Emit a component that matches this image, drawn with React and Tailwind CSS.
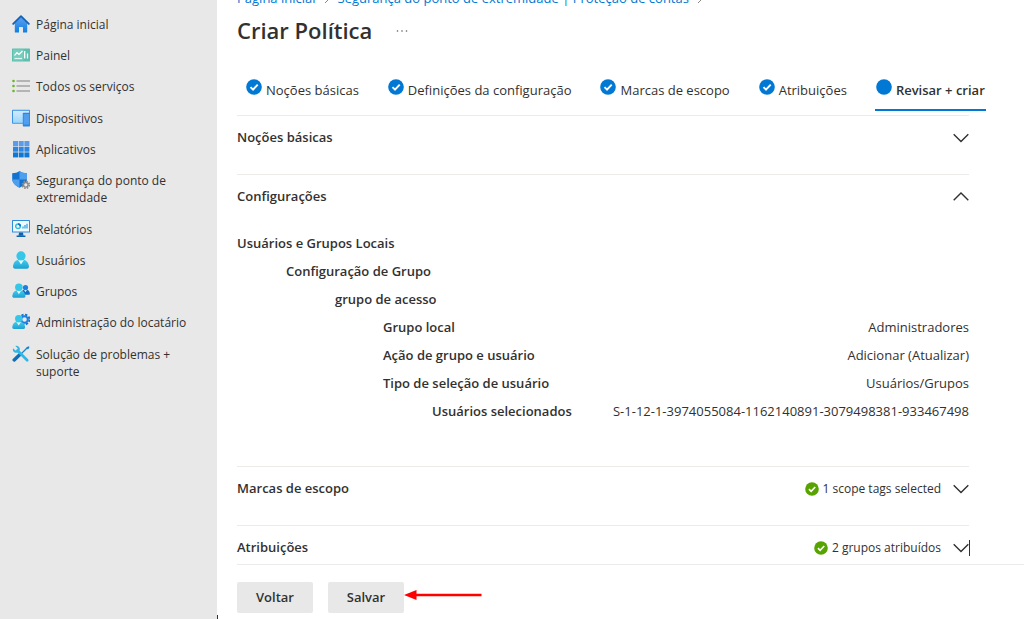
import React, { useState } from 'react';

const HomeIcon = () => (
  <svg width="18" height="18" viewBox="0 0 18 18" className="-mt-px shrink-0" aria-hidden="true">
    <defs>
      <linearGradient id="home-a" x1="0" y1="0" x2="0" y2="1">
        <stop offset="0" stopColor="#5ea0ef" />
        <stop offset="1" stopColor="#0f7fe3" />
      </linearGradient>
    </defs>
    <path d="M9 2.2 2.8 8.3v8.6c0 .3.2.6.6.6H7v-4.9c0-.4.2-.6.6-.6h2.8c.4 0 .6.2.6.6v4.9h3.6c.4 0 .6-.3.6-.6V8.3z" fill="url(#home-a)" />
    <path d="M9.6.6a.9.9 0 0 0-1.2 0L.3 8.5c-.2.2-.2.5 0 .7l.6.6c.2.2.5.2.7 0L9 2.6l7.4 7.2c.2.2.5.2.7 0l.6-.6c.2-.2.2-.5 0-.7z" fill="#0f62b8" />
  </svg>
);

const DashboardIcon = () => (
  <svg width="18" height="18" viewBox="0 0 18 18" className="-mt-px shrink-0" aria-hidden="true">
    <rect x="0" y="2.5" width="18" height="13" rx=".6" fill="#5fbfae" />
    <rect x="1" y="3.5" width="10.5" height="11" fill="#77cdbd" />
    <path d="M2.500 9.5 5 6.7l2 1.8L10.500 5" fill="none" stroke="#fff" strokeWidth="1.2" />
    <path d="M2.500 12.500H10" stroke="#e2f5f1" strokeWidth="1.2" />
    <path d="M12.700 5v7.500M15.500 7.500v5" stroke="#fff" strokeWidth="1.3" />
  </svg>
);

const ServicesIcon = () => (
  <svg width="18" height="18" viewBox="0 0 18 18" className="-mt-px shrink-0" aria-hidden="true">
    <path d="M4.500 4H18M4.500 9H18M4.500 14H18" stroke="#a3a3a3" strokeWidth="1.3" />
    <g fill="#6bb52c">
      <circle cx="1.5" cy="4" r="1.3" />
      <circle cx="1.5" cy="9" r="1.3" />
      <circle cx="1.5" cy="14" r="1.3" />
    </g>
  </svg>
);

const DevicesIcon = () => (
  <svg width="18" height="18" viewBox="0 0 18 18" className="-mt-px shrink-0" aria-hidden="true">
    <defs>
      <linearGradient id="dev-a" x1="0" y1="0" x2="0" y2="1">
        <stop offset="0" stopColor="#d2ebff" />
        <stop offset="1" stopColor="#9bd6fa" />
      </linearGradient>
    </defs>
    <rect x="0" y=".8" width="18" height="14" rx=".7" fill="#3b92e6" />
    <rect x="1" y="1.8" width="16" height="12" fill="url(#dev-a)" />
    <rect x="10.8" y="3.8" width="7.2" height="13.700" rx=".7" fill="#2e84e0" />
    <rect x="11.600" y="5" width="5.600" height="10.500" fill="#4f9fee" />
  </svg>
);

const AppsIcon = () => (
  <svg width="18" height="18" viewBox="0 0 18 18" className="-mt-px shrink-0" aria-hidden="true">
    <g fill="#5b9bea">
      <rect x="1" y="1" width="5" height="5" />
      <rect x="6.7" y="1" width="5" height="5" />
      <rect x="12.4" y="1" width="5" height="5" />
    </g>
    <g fill="#2e86e0">
      <rect x="1" y="6.7" width="5" height="5" />
      <rect x="6.7" y="6.7" width="5" height="5" />
      <rect x="12.4" y="6.7" width="5" height="5" />
    </g>
    <g fill="#0e78d4">
      <rect x="1" y="12.4" width="5" height="5" />
      <rect x="6.7" y="12.4" width="5" height="5" />
      <rect x="12.4" y="12.4" width="5" height="5" />
    </g>
  </svg>
);

const SecurityIcon = () => (
  <svg width="18" height="18" viewBox="0 0 18 18" className="-mt-px shrink-0" aria-hidden="true">
    <path d="M7.500 0C9.500 1.600 12 2.200 15 2.200V8c0 4-4 7.200-7.500 8.700C4 15.200.2 12 .2 8V2.200C3 2.200 5.500 1.600 7.500 0z" fill="#1173cf" />
    <path d="M7.500 0C9.500 1.600 12 2.200 15 2.200V8.500H7.500z" fill="#4f9ff0" />
    <path d="M7.500 8.500H.2c.3 3.700 4 6.800 7.300 8.200z" fill="#4f9ff0" />
    <circle cx="13.8" cy="13.8" r="3.5" fill="none" stroke="#8a8a8a" strokeWidth="1.6" strokeDasharray="1.55 1.2" />
    <circle cx="13.8" cy="13.8" r="2.3" fill="#e8e8e8" stroke="#8a8a8a" strokeWidth="1.4" />
  </svg>
);

const ReportsIcon = () => (
  <svg width="18" height="18" viewBox="0 0 18 18" className="-mt-px shrink-0" aria-hidden="true">
    <rect x="0" y="0" width="18" height="12.500" rx=".6" fill="#2d8ddb" />
    <rect x="1" y="1" width="16" height="10.500" fill="#f0f9ff" />
    <circle cx="6" cy="6.200" r="2.300" fill="none" stroke="#32bedd" strokeWidth="1.5" />
    <path d="M6 3.900A2.300 2.300 0 0 1 8.300 6.200" fill="none" stroke="#0f6fc5" strokeWidth="1.5" />
    <path d="M11 8.400V6.500M13 8.400V5M15 8.400V3.800" stroke="#32a5dd" strokeWidth="1.3" />
    <path d="M7 12.500h4l.5 3.200H6.500z" fill="#0f62b0" />
    <rect x="4.5" y="15.400" width="9" height="1.600" rx=".4" fill="#0f62b0" />
  </svg>
);

const UserShape = ({ id }) => (
  <>
    <defs>
      <linearGradient id={id} x1="0" y1="0" x2="0" y2="1">
        <stop offset="0" stopColor="#3fd0ee" />
        <stop offset="1" stopColor="#1f9fd0" />
      </linearGradient>
    </defs>
    <path d="M15 17.700c1.200 0 2.100-1 2-2.200-.6-4.200-2.800-7-8-7s-7.500 2.400-8 7c-.1 1.200.8 2.200 2 2.200z" fill={`url(#${id})`} />
    <path d="M6.200 8.900 9 13.400l2.800-4.500z" fill="#e9fbff" />
    <circle cx="9" cy="4.9" r="4.6" fill="#35c6e8" />
  </>
);

const UsersIcon = () => (
  <svg width="18" height="18" viewBox="0 0 18 18" className="-mt-px shrink-0" aria-hidden="true">
    <UserShape id="user-a" />
  </svg>
);

const GroupsIcon = () => (
  <svg width="18" height="18" viewBox="0 0 18 18" className="-mt-px shrink-0" aria-hidden="true">
    <path d="M16.800 12.800c.7 0 1.200-.6 1.100-1.300-.4-2.600-1.700-4-4.500-4s-3.700 1.500-4 4l.5 1.300z" fill="#0f6fc5" />
    <path d="m12 7.800 1.500 2.400L15 7.800z" fill="#d7ecff" />
    <circle cx="13.5" cy="5.5" r="2.6" fill="#1a7fe0" />
    <g transform="translate(-.5 1.2) scale(.82)">
      <UserShape id="user-b" />
    </g>
  </svg>
);

const TenantIcon = () => (
  <svg width="18" height="18" viewBox="0 0 18 18" className="-mt-px shrink-0" aria-hidden="true">
    <circle cx="12.5" cy="6.5" r="4.9" fill="none" stroke="#1173cf" strokeWidth="1.9" strokeDasharray="2.3 1.548" />
    <circle cx="12.5" cy="6.5" r="3.3" fill="#e8e8e8" stroke="#1a7fe0" strokeWidth="2" />
    <g transform="translate(-.5 1.8) scale(.8)">
      <UserShape id="user-c" />
    </g>
  </svg>
);

const ToolsIcon = () => (
  <svg width="18" height="18" viewBox="0 0 18 18" className="-mt-px shrink-0" aria-hidden="true">
    <path d="M15.800 2.200 9 9" stroke="#1a86cf" strokeWidth="1.3" />
    <path d="m14.700 2.200 2-1 .8.800-1 2-1 .2-1-1z" fill="#1a86cf" />
    <path d="m8.200 9.200-6 5.700" stroke="#0f6cb5" strokeWidth="3.4" strokeLinecap="round" />
    <path d="m5.500 5.500 9.700 9.700" stroke="#32b5e3" strokeWidth="2.7" strokeLinecap="round" />
    <path d="M3.300.9 5.700 3.300 5.200 5l-1.700.5L1 3.200C.5 5.200 1.200 6.800 2.700 7.500c1.700.8 3.500.2 4.500-1.300s.9-3-.2-4.200C6 1 4.700.5 3.300.9z" fill="#32b5e3" />
  </svg>
);

const ChevronIcon = ({ open }) => (
  <svg width="16" height="16" viewBox="0 0 16 16" className="shrink-0" aria-hidden="true">
    <path
      d={open ? 'M.7 11.2 8 3.9l7.3 7.3' : 'M.7 4.3 8 11.6l7.3-7.3'}
      fill="none"
      stroke="#323130"
      strokeWidth="1.4"
    />
  </svg>
);

// Filled status circle, with the tick left out for the current step
const StatusIcon = ({ color, size, tick = true }) => (
  <svg width={size} height={size} viewBox="0 0 16 16" className="shrink-0" aria-hidden="true">
    <circle cx="8" cy="8" r="7.8" fill={color} />
    {tick && <path d="m4.500 8.200 2.500 2.500 4.700-5" fill="none" stroke="#fff" strokeWidth="1.9" />}
  </svg>
);

const SeparatorIcon = () => (
  <svg width="6" height="10" viewBox="0 0 6 10" className="shrink-0" aria-hidden="true">
    <path d="m1 1 4 4-4 4" fill="none" stroke="#8a8886" />
  </svg>
);

const menuGroups = [
  [
    { label: 'Página inicial', Icon: HomeIcon },
    { label: 'Painel', Icon: DashboardIcon },
    { label: 'Todos os serviços', Icon: ServicesIcon },
  ],
  [
    { label: 'Dispositivos', Icon: DevicesIcon },
    { label: 'Aplicativos', Icon: AppsIcon },
    { label: 'Segurança do ponto de extremidade', Icon: SecurityIcon },
  ],
  [
    { label: 'Relatórios', Icon: ReportsIcon },
    { label: 'Usuários', Icon: UsersIcon },
    { label: 'Grupos', Icon: GroupsIcon },
    { label: 'Administração do locatário', Icon: TenantIcon },
  ],
  [{ label: 'Solução de problemas + suporte', Icon: ToolsIcon }],
];

const steps = ['Noções básicas', 'Definições da configuração', 'Marcas de escopo', 'Atribuições', 'Revisar + criar'];

const settings = [
  { name: 'Usuários e Grupos Locais', indent: 'pl-0' },
  { name: 'Configuração de Grupo', indent: 'pl-[49px]' },
  { name: 'grupo de acesso', indent: 'pl-[98px]' },
  { name: 'Grupo local', indent: 'pl-[146px]', value: 'Administradores' },
  { name: 'Ação de grupo e usuário', indent: 'pl-[146px]', value: 'Adicionar (Atualizar)' },
  { name: 'Tipo de seleção de usuário', indent: 'pl-[146px]', value: 'Usuários/Grupos' },
  { name: 'Usuários selecionados', indent: 'pl-[195px]', value: 'S-1-12-1-3974055084-1162140891-3079498381-933467498' },
];

const Sidebar = () => (
  <nav className="w-[217px] shrink-0 bg-[#e8e8e8] pt-[9px] pl-3">
    <div className="flex flex-col gap-px">
      {menuGroups.map((group, i) => (
        <ul key={i}>
          {group.map(({ label, Icon }) => (
            <li key={label}>
              <a href="#" className="flex items-start gap-[6px] py-[7px] pr-7 text-xs leading-[17px] text-[#323130]">
                <Icon />
                <span>{label}</span>
              </a>
            </li>
          ))}
        </ul>
      ))}
    </div>
  </nav>
);

const Section = ({ title, status, defaultOpen = false, caret = false, children }) => {
  const [open, setOpen] = useState(defaultOpen);

  return (
    <section className="border-t border-[#edebe9] pb-[14px]">
      <h2>
        <button
          type="button"
          aria-expanded={open}
          onClick={() => setOpen(!open)}
          className="relative flex h-11 w-full items-center text-left"
        >
          <span className="flex-1 text-[13px] font-semibold">{title}</span>
          {status && (
            <span className="mr-3 flex items-center gap-1 text-xs">
              <StatusIcon color="#57a300" size={14} />
              {status}
            </span>
          )}
          <ChevronIcon open={open} />
          {caret && <span className="absolute -right-px h-4 w-px bg-[#323130]" />}
        </button>
      </h2>
      {open && children}
    </section>
  );
};

const App = () => {
  return (
    <div className="flex h-screen overflow-hidden bg-white font-['Open_Sans',sans-serif] text-[#323130]">
      <Sidebar />
      <main className="relative flex min-w-0 flex-1 flex-col">
        <div className="flex min-h-0 flex-1 flex-col overflow-hidden pl-5">
          {/* Scrolled partly out of view above the title */}
          <div className="-mt-[10px] flex h-[18px] shrink-0 items-center gap-2 text-[13px] whitespace-nowrap text-[#0078d4]">
            <a href="#">Página inicial</a>
            <SeparatorIcon />
            <a href="#">Segurança do ponto de extremidade | Proteção de contas</a>
            <SeparatorIcon />
          </div>

          <div className="flex h-[45px] shrink-0 items-center gap-6">
            <h1 className="text-[22px] font-semibold">Criar Política</h1>
            <button type="button" aria-label="Mais opções">
              <svg width="12" height="4" viewBox="0 0 12 4" aria-hidden="true">
                <g fill="#605e5c">
                  <circle cx="1.5" cy="2" r=".8" />
                  <circle cx="6" cy="2" r=".8" />
                  <circle cx="10.5" cy="2" r=".8" />
                </g>
              </svg>
            </button>
          </div>

          <div className="mt-[17px] flex h-[41px] shrink-0 items-stretch gap-[27px] pl-2 whitespace-nowrap">
            {steps.map((step, i) => {
              const current = i === steps.length - 1;
              return (
                <button
                  key={step}
                  type="button"
                  aria-current={current ? 'step' : undefined}
                  className={
                    current
                      ? 'flex items-start gap-1 border-b-2 border-[#0078d4] px-px pt-[9px] text-[13px] leading-[22px] font-semibold'
                      : 'flex items-start gap-1 px-px pt-[9px] text-[13px] leading-[22px]'
                  }
                >
                  <StatusIcon color="#0078d4" size={16} tick={!current} />
                  <span>{step}</span>
                </button>
              );
            })}
          </div>

          <div className="mt-1 mr-[55px]">
            <Section title="Noções básicas" />
            <Section title="Configurações" defaultOpen>
              <table className="mt-[11px] mb-[26px] w-full text-[13px]">
                <tbody>
                  {settings.map(({ name, indent, value }) => (
                    <tr key={name} className="h-7">
                      <th scope="row" className={`${indent} text-left font-semibold whitespace-nowrap`}>
                        {name}
                      </th>
                      <td className="text-right">{value}</td>
                    </tr>
                  ))}
                </tbody>
              </table>
            </Section>
            <Section title="Marcas de escopo" status="1 scope tags selected" />
            <Section title="Atribuições" status="2 grupos atribuídos" caret />
          </div>
        </div>

        <footer className="ml-5 flex h-[55px] shrink-0 items-center gap-[15px] border-t border-[#edebe9] pt-[10px]">
          <button type="button" className="h-[31px] w-19 rounded-xs bg-[#e8e8e8] pt-0.5 text-[13px] font-semibold">
            Voltar
          </button>
          <div className="flex items-start">
            <button type="button" className="h-[31px] w-19 rounded-xs bg-[#e8e8e8] pt-0.5 text-[13px] font-semibold">
              Salvar
            </button>
            <svg width="78" height="26" viewBox="0 0 78 26" aria-hidden="true">
              <path d="M10 13h67.500" stroke="#f00" strokeWidth="2.6" />
              <path d="M0 13 12.500 8v10z" fill="#f00" />
            </svg>
          </div>
        </footer>
        <span className="absolute bottom-0 left-0 h-1 w-px bg-[#323130]" />
      </main>
    </div>
  );
};

export default App;
